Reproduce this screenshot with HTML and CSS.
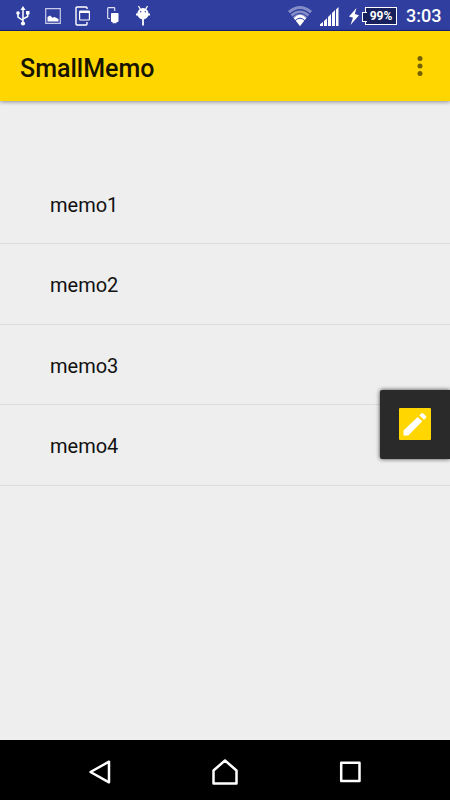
FILE: index.html
```html
<!DOCTYPE html>
<html lang="en">
<head>
<meta charset="utf-8">
<title>SmallMemo</title>
<link rel="stylesheet" href="styles.css">
</head>
<body>
<div class="screen">
  <header class="status">
    <div class="notifications">
      <svg width="14" height="20" viewBox="0 0 14 20" fill="none" stroke="#fff" stroke-width="1.5"><path d="M7 3v14M7 14.500L2 11V6.500M7 13l4.700-2.500V7"/><path d="M4.500 4L7 0l2.500 4zM10 5h3.500v3.500H10z" fill="#fff" stroke="none"/><circle cx="2" cy="7" r="1.800" fill="#fff" stroke="none"/><circle cx="7" cy="17.500" r="2.100" fill="#fff" stroke="none"/></svg>
      <svg class="picture" width="16" height="16" viewBox="0 0 16 16"><path d="M.7.7h14.600v14.600H.7z" fill="none" stroke="#c8cbe8" stroke-width="1.200"/><path d="M2.500 13.500V9L5 7.500l2.500 2.300 2-.8 4 2v2.500z" fill="#fff"/></svg>
      <svg class="card" width="16" height="20" viewBox="0 0 16 20" fill="none" stroke="#fff"><path d="M12 3V2q0-1-1-1H2Q1 1 1 2v16q0 1 1 1h9q1 0 1-1v-2" stroke-width="1.400"/><rect x="4.600" y="5" width="9.800" height="9" rx=".8" stroke-width="1.200"/><path d="M4.500 6h10" stroke-width="2"/></svg>
      <svg class="devices" width="12" height="17" viewBox="0 0 12 17"><path d="M3 11.500H1.500Q.7 11.500.7 10.700V1.500Q.7.700 1.500.700H7Q7.700.700 7.700 1.500V4" fill="none" stroke="#dfe1f2" stroke-width="1.200"/><rect x="4" y="6" width="7.500" height="9" rx=".8" fill="#fff"/><path d="M5.500 15h4v1.200h-4z" fill="#fff"/></svg>
      <svg class="droid" width="14" height="21" viewBox="0 0 14 21"><path d="M2.500 1l2 3.500M11.500 1l-2 3.500" stroke="#fff" stroke-width="1.300"/><ellipse cx="7" cy="8.800" rx="5.600" ry="5.700" fill="#fff"/><path d="M0 9.500h2M12 9.500h2" stroke="#fff" stroke-width="1.800"/><path d="M7 14v6.500" stroke="#fff" stroke-width="1.800"/><circle cx="4.700" cy="6.800" r=".7" fill="#303f9f"/><circle cx="9.300" cy="6.800" r=".7" fill="#303f9f"/></svg>
    </div>
    <div class="system">
      <svg width="24" height="20" viewBox="0 0 24 20"><path d="M0 5Q12-5 24 5L12 20z" fill="#858dc9"/><path d="M1.700 8.200Q12-.8 22.300 8.200" fill="none" stroke="#303f9f" stroke-width="1.300"/><path d="M5.800 12.200Q12 5.500 18.200 12.200L12 20z" fill="#fff"/><path d="M4.200 11.200Q12 3.500 19.800 11.200M7 14.800Q12 9.500 17 14.800" fill="none" stroke="#303f9f" stroke-width="1"/></svg>
      <svg class="signal" width="19" height="19" viewBox="0 0 19 19" fill="#fff"><path d="M0 19v-1.800L3 15v4zM4 19v-5l3-2.800V19zM8 19v-9l3-3v12zM12 19V6l3-3v16zM16 19V2.500L18.500 0v19z"/></svg>
      <svg class="bolt" width="10" height="17" viewBox="0 0 10 17" fill="#fff"><path d="M7.500 0L0 8.500l4 1.200L1.500 17 10 7.200 5.800 6z"/></svg>
      <div class="battery">99%</div>
      <span class="time">3:03</span>
    </div>
  </header>
  <div class="appbar">
    <h1>SmallMemo</h1>
    <svg width="6" height="20" viewBox="0 0 6 20" fill="#736000"><circle cx="3" cy="2.500" r="2.500"/><circle cx="3" cy="10" r="2.500"/><circle cx="3" cy="17.500" r="2.500"/></svg>
  </div>
  <main class="content">
    <ul class="memos">
      <li>memo1</li>
      <li>memo2</li>
      <li>memo3</li>
      <li>memo4</li>
    </ul>
    <div class="floating">
      <svg width="32" height="32" viewBox="0 0 32 32"><rect width="32" height="32" rx="1" fill="#ffd600"/><path d="M4.500 22.500L18.700 8.900l4.600 4.400L9.300 27.500H4.500zM20.300 7.300l2-1.900q1-.8 2 0l2.600 2.600q.8 1 0 2l-1.900 1.800z" fill="#fff"/></svg>
    </div>
  </main>
  <nav class="navbar">
    <svg width="22" height="24" viewBox="0 0 22 24"><path d="M20 1.700v20.600L1.500 12z"/></svg>
    <svg width="26" height="26" viewBox="0 0 26 26"><path d="M1.500 11.500L13 1.500l11.500 10v13h-23z"/></svg>
    <svg width="22" height="22" viewBox="0 0 22 22"><path d="M2.200 1.700h18.300v18.300H2.200z"/></svg>
  </nav>
</div>
</body>
</html>
```

FILE: styles.css
```css
* { box-sizing: border-box; }
body { margin: 0; font-family: Roboto, "Liberation Sans", sans-serif; }
svg { display: block; flex: none; }
.screen { width: 450px; height: 800px; display: flex; flex-direction: column; overflow: hidden; background: #eee; }
.status { height: 31px; flex: none; display: flex; justify-content: space-between; padding: 0 9px 0 16px; background: #303f9f; border-bottom: 1px solid #1a1f80; }
.notifications, .system { display: flex; align-items: center; }
.notifications { padding-top: 1px; }
.picture { margin-left: 15px; }
.card { margin-left: 14px; }
.devices { margin-left: 16px; margin-top: -1px; }
.droid { margin-left: 17px; margin-top: -1px; }
.system { color: #fff; padding-top: 2px; }
.signal { margin-left: 8px; }
.bolt { margin-left: 10px; }
.battery { position: relative; width: 32px; height: 18px; margin-left: 6px; border: 1.500px solid #fff; background: #171f5c; font-size: 12px; font-weight: 700; line-height: 16px; text-align: center; }
.battery::before { content: ""; position: absolute; left: -4px; top: 4px; width: 4px; height: 8px; border: 1px solid #fff; border-right: 0; background: #171f5c; }
.time { margin-left: 9px; width: 35px; font-size: 18px; font-weight: 500; line-height: 28px; white-space: nowrap; }
.appbar { position: relative; height: 70px; flex: none; display: flex; align-items: center; justify-content: space-between; padding: 0 27px 0 20px; background: #ffd600; box-shadow: 0 1px 4px rgba(0, 0, 0, .4); }
h1 { margin: 5px 0 0; font-size: 25px; line-height: 30px; font-weight: 500; color: #161300; }
.content { position: relative; flex: 1; padding-top: 62.500px; }
.memos { margin: 0; padding: 0; list-style: none; }
.memos li { height: 80.670px; padding-left: 50px; border-bottom: 1px solid #dcdcdc; font-size: 20px; line-height: 82px; color: #111; }
.floating { position: absolute; right: 0; top: 289px; width: 70px; height: 69px; display: flex; align-items: center; padding: 0 0 1px 19px; background: #2a2a2a; border-radius: 2px 0 0 2px; box-shadow: 0 0 4px rgba(0, 0, 0, .75); }
.navbar { height: 60px; flex: none; display: flex; align-items: center; justify-content: space-between; padding: 4px 89px 0; background: #000; }
.navbar path { fill: none; stroke: #fff; stroke-width: 2.500; stroke-linejoin: round; }
```
